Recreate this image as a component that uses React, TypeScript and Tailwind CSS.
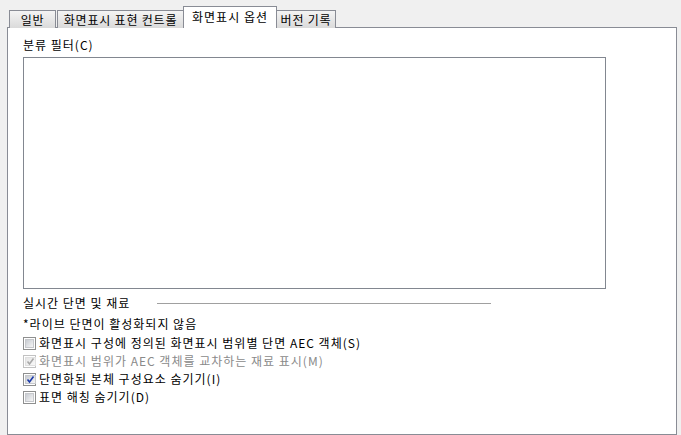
import React from "react";

const font = { fontFamily: '"Noto Sans CJK KR", "Noto Sans", sans-serif' };

function Tab({ label, active, cls }: { label: string; active?: boolean; cls: string }) {
  if (active) {
    return (
      <div
        className={`${cls} h-[22px] bg-white border border-[#898c95] border-b-0 relative z-10 flex items-start justify-center pt-[2px] text-[12px] tracking-[1px] text-black leading-[16px]`}
      >
        {label}
      </div>
    );
  }
  return (
    <div
      className={`${cls} h-[18px] border border-[#898c95] border-b-0 bg-gradient-to-b from-[#f4f4f4] to-[#dadada] flex items-center justify-center text-[12px] tracking-[0.8px] text-black leading-[16px]`}
    >
      {label}
    </div>
  );
}

function Check({ state }: { state: "off" | "on" | "disabled" }) {
  return (
    <div
      className={`w-[13px] h-[13px] border ${state === "disabled" ? "border-[#c2c2c2]" : "border-[#8e8f8f]"} bg-white p-[1px] flex shrink-0`}
    >
      <div
        className={`flex-1 bg-gradient-to-br ${state === "disabled" ? "from-[#e6e6e6] to-[#f8f8f8] border-[#e0e0e0]" : "from-[#c8ccd2] to-[#f6f6f6] border-[#c6c8cc]"} border flex items-center justify-center`}
      >
        {state !== "off" && (
          <svg width="9" height="9" viewBox="0 0 9 9">
            <path
              d="M1.5 4.5 L3.5 7 L7.5 1.5"
              fill="none"
              stroke={state === "on" ? "#1c3aa9" : "#a9a9a9"}
              strokeWidth="1.6"
            />
          </svg>
        )}
      </div>
    </div>
  );
}

function Row({ state, label }: { state: "off" | "on" | "disabled"; label: string }) {
  return (
    <div className="flex items-center h-[18px] gap-[3px]">
      <Check state={state} />
      <span className={`text-[12px] leading-[16px] tracking-[1px] ${state === "disabled" ? "text-[#8a8a8a]" : "text-black"}`}>
        {label}
      </span>
    </div>
  );
}

export default function App() {
  return (
    <div className="w-[681px] h-[435px] bg-[#f0f0f0] overflow-hidden pl-[7px] pt-[6px]" style={font}>
      <div className="flex items-end h-[22px] pl-[2px] -mb-px relative z-10">
        <Tab label="일반" cls="w-[47px]" />
        <Tab label="화면표시 표현 컨트롤" cls="w-[127px] ml-[1px]" />
        <Tab label="화면표시 옵션" cls="w-[94px] -ml-px" active />
        <Tab label="버전 기록" cls="w-[60px] -ml-px" />
      </div>
      <div className="w-[670px] h-[408px] bg-white border border-[#898c95] pl-[15px] pt-[9px]">
        <div className="text-[12px] leading-[16px] tracking-[1px] text-black">분류 필터(C)</div>
        <div className="mt-[4px] w-[583px] h-[232px] border border-[#828790] bg-white" />
        <div className="mt-[6px] flex items-center h-[16px]">
          <span className="w-[134px] text-[12px] leading-[16px] tracking-[1px] text-black whitespace-nowrap">실시간 단면 및 재료</span>
          <div className="w-[334px] h-px bg-[#a0a0a0]" />
        </div>
        <div className="mt-[5px] text-[12px] leading-[16px] tracking-[1px] text-black">*라이브 단면이 활성화되지 않음</div>
        <div className="mt-[2px] flex flex-col">
          <Row state="off" label="화면표시 구성에 정의된 화면표시 범위별 단면 AEC 객체(S)" />
          <Row state="disabled" label="화면표시 범위가 AEC 객체를 교차하는 재료 표시(M)" />
          <Row state="on" label="단면화된 본체 구성요소 숨기기(I)" />
          <Row state="off" label="표면 해칭 숨기기(D)" />
        </div>
      </div>
    </div>
  );
}
